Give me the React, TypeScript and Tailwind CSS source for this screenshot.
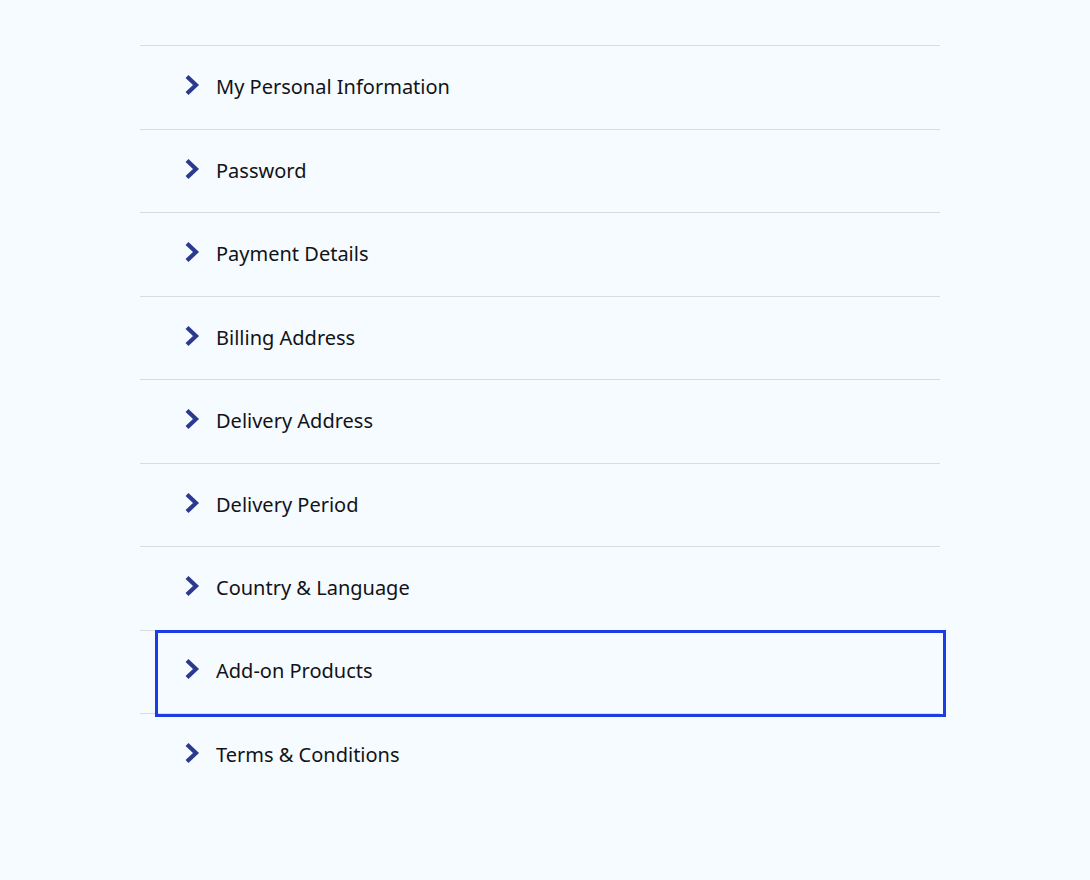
import React from 'react';

const items = [
  'My Personal Information',
  'Password',
  'Payment Details',
  'Billing Address',
  'Delivery Address',
  'Delivery Period',
  'Country & Language',
  'Add-on Products',
  'Terms & Conditions',
];

function Chevron() {
  return (
    <svg width="16" height="22" viewBox="0 0 16 22" className="shrink-0 mb-[4px]">
      <path d="M3 2.5 L12 11 L3 19.5" fill="none" stroke="#2b3990" strokeWidth="4.2" />
    </svg>
  );
}

export default function App() {
  const focused = 'Add-on Products';
  return (
    <div
      className="min-h-[880px] w-full bg-[#f6fbff] pt-[45px]"
      style={{ fontFamily: '"Noto Sans", "Liberation Sans", sans-serif' }}
    >
      <ul className="ml-[140px] w-[800px]">
        {items.map((label) => (
          <li key={label} className="border-t border-[#d9dde2]">
            {label === focused ? (
              <div className="relative z-10 -mt-px -mb-[3.5px] ml-[15px] mr-[-6px] h-[87px] border-[3px] border-[#1a3de6] flex items-center gap-[16px] pl-[26px] pb-[4px]">
                <Chevron />
                <span className="text-[20px] text-[#111318]">{label}</span>
              </div>
            ) : (
              <div className="h-[82.5px] flex items-center gap-[16px] pl-[44px]">
                <Chevron />
                <span className="text-[20px] text-[#111318]">{label}</span>
              </div>
            )}
          </li>
        ))}
      </ul>
    </div>
  );
}
